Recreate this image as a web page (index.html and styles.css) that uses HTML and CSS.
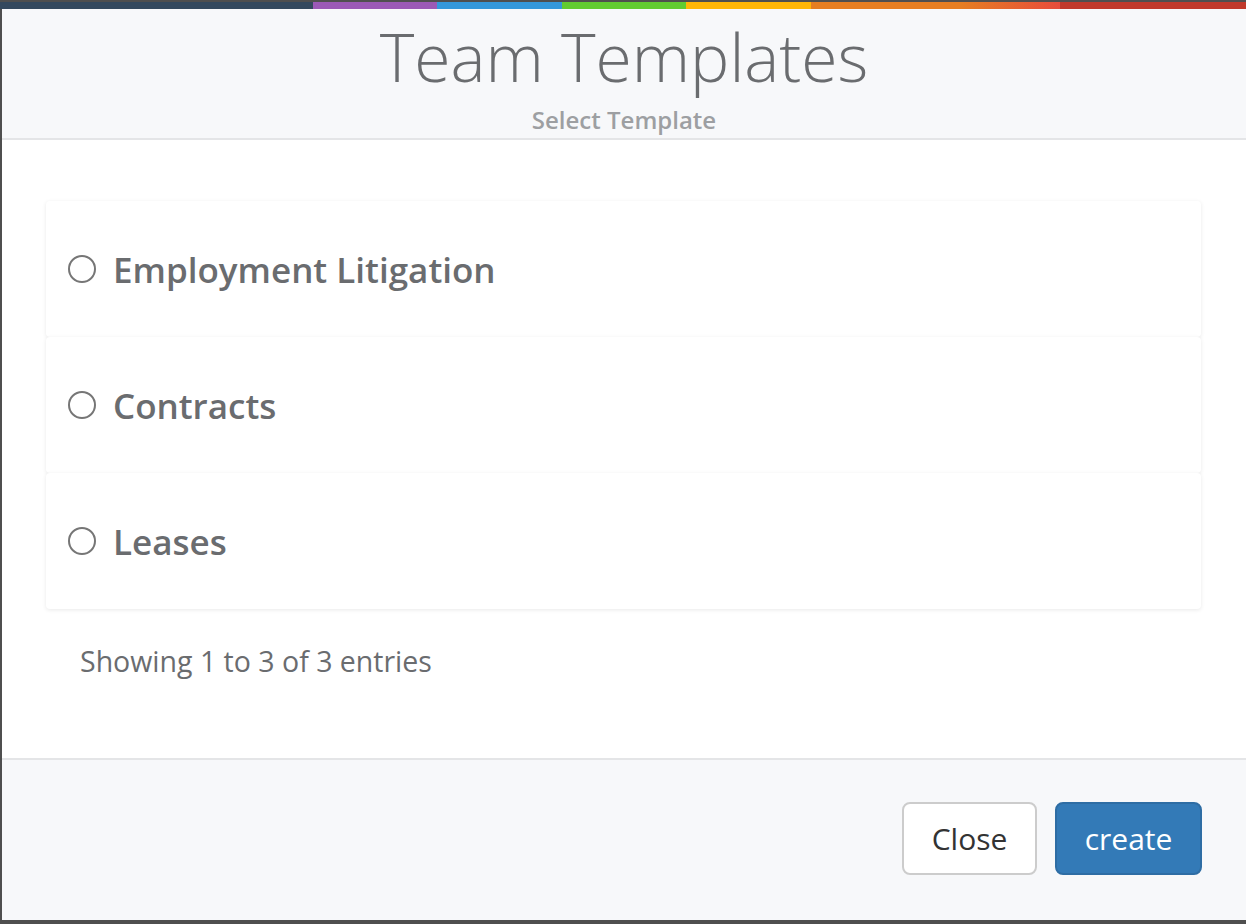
FILE: index.html
```html
<!DOCTYPE html>
<html>
<head>
<meta charset="utf-8">
<link rel="stylesheet" href="styles.css">
</head>
<body>
<div class="modal">
  <div class="colorbar">
    <span class="c1"></span><span class="c2"></span><span class="c3"></span><span class="c4"></span><span class="c5"></span><span class="c6"></span><span class="c7"></span>
  </div>
  <div class="header">
    <h1 class="title">Team Templates</h1>
    <div class="subtitle">Select Template</div>
  </div>
  <div class="body">
    <div class="list">
      <label class="row"><span class="radio"></span><span class="name">Employment Litigation</span></label>
      <label class="row"><span class="radio"></span><span class="name">Contracts</span></label>
      <label class="row"><span class="radio"></span><span class="name">Leases</span></label>
    </div>
    <div class="info">Showing 1 to 3 of 3 entries</div>
  </div>
  <div class="footer">
    <button class="btn btn-default">Close</button>
    <button class="btn btn-primary">create</button>
  </div>
</div>
</body>
</html>
```
FILE: styles.css
```css
html, body {
  margin: 0;
  padding: 0;
}
body {
  background: #4f4f4f;
  font-family: "Open Sans", "Liberation Sans", sans-serif;
  width: 1246px;
  height: 924px;
  overflow: hidden;
}
.modal {
  margin: 2px 0 0 2px;
  width: 1244px;
  height: 918px;
  display: flex;
  flex-direction: column;
  background: #fff;
}
.colorbar {
  display: flex;
  height: 7px;
  flex: none;
  margin-left: -2px;
}
.colorbar span { display: block; height: 100%; }
.c1 { width: 313px; background: #34495e; }
.c2 { width: 124px; background: #9b59b6; }
.c3 { width: 125px; background: #3498db; }
.c4 { width: 124px; background: #62cb31; }
.c5 { width: 125px; background: #ffb606; }
.c6 { width: 249px; background: linear-gradient(to right, #e67e22 0%, #e67e22 60%, #e74c3c 100%); }
.c7 { flex: 1; background: #c0392b; }
.header {
  flex: none;
  background: #f7f8fa;
  border-bottom: 2px solid #e4e5e7;
  height: 131px;
  box-sizing: border-box;
  padding-top: 14px;
  text-align: center;
}
.title {
  margin: 0;
  font-size: 66px;
  line-height: 66px;
  font-weight: 300;
  color: #6a6c6f;
}
.subtitle {
  margin-top: 18px;
  font-size: 24px;
  line-height: 26px;
  font-weight: 600;
  color: #9d9fa2;
}
.body {
  flex: none;
  height: 620px;
  box-sizing: border-box;
  padding: 61px 45px 0 44px;
  border-bottom: 2px solid #e4e5e7;
}
.list {
  display: flex;
  flex-direction: column;
}
.row {
  display: flex;
  align-items: center;
  height: 136px;
  padding-left: 22px;
  background: #fff;
  border-radius: 4px;
  box-shadow: 0 1px 4px rgba(0, 0, 0, 0.09);
  box-sizing: border-box;
}
.radio {
  width: 24px;
  height: 24px;
  border: 2px solid #767676;
  border-radius: 50%;
  flex: none;
  margin-right: 17px;
}
.name {
  font-size: 35px;
  font-weight: 600;
  color: #6a6c6f;
}
.info {
  margin-top: 33px;
  padding-left: 34px;
  font-size: 28.5px;
  line-height: 38px;
  color: #6a6c6f;
}
.footer {
  flex: 1;
  background: #f7f8fa;
  display: flex;
  justify-content: flex-end;
  align-items: flex-start;
  gap: 18px;
  padding: 42px 44px 0 0;
}
.btn {
  height: 73px;
  border-radius: 8px;
  font-family: "Open Sans", "Liberation Sans", sans-serif;
  font-size: 30px;
  line-height: 1;
  cursor: pointer;
  box-sizing: border-box;
}
.btn-default {
  width: 135px;
  background: #fff;
  border: 2px solid #cccccc;
  color: #333;
}
.btn-primary {
  width: 147px;
  background: #337ab7;
  border: 2px solid #2e6da4;
  color: #fff;
}
```
